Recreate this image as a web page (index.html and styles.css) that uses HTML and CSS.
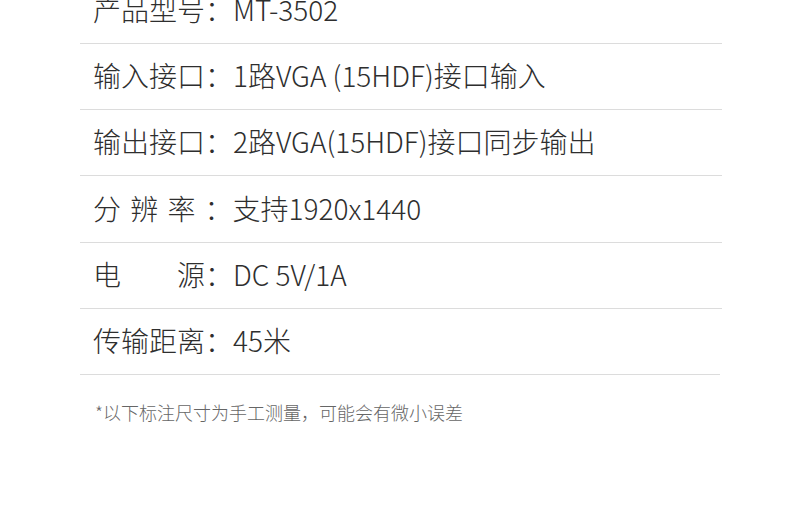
FILE: index.html
```html
<!DOCTYPE html>
<html>
<head>
	<meta charset="UTF-8">
	<link rel="stylesheet" href="styles.css">
</head>
<body>
	<div class="specs">
		<div class="row">产品型号：MT-3502</div>
		<div class="row">输入接口：1路VGA (15HDF)接口输入</div>
		<div class="row">输出接口：2路VGA(15HDF)接口同步输出</div>
		<div class="row spaced">分 辨 率 ：支持1920x1440</div>
		<div class="row">电　　源：DC 5V/1A</div>
		<div class="row last">传输距离：45米</div>
	</div>

	<p class="note">*以下标注尺寸为手工测量，可能会有微小误差</p>
</body>
</html>
```

FILE: styles.css
```css
body {
	margin: 0;
	background: #fff;
	font-family: "Noto Sans CJK SC", "Noto Sans", sans-serif;
}

.specs {
	margin: -22px 0 0 80px;
	width: 642px;
}

.row {
	height: 65px;
	line-height: 63px;
	padding-left: 13px;
	border-bottom: 1px solid #dcdcdc;
	font-size: 28px;
	font-weight: 300;
	color: #2e2e2e;
	white-space: nowrap;
}

.row.spaced {
	height: 66px;
	line-height: 65px;
	word-spacing: 3px;
}

.row.last {
	margin-right: 2px;
}

.note {
	margin: 24px 0 0 95px;
	font-size: 18px;
	font-weight: 300;
	line-height: 26px;
	color: #666;
}
```
